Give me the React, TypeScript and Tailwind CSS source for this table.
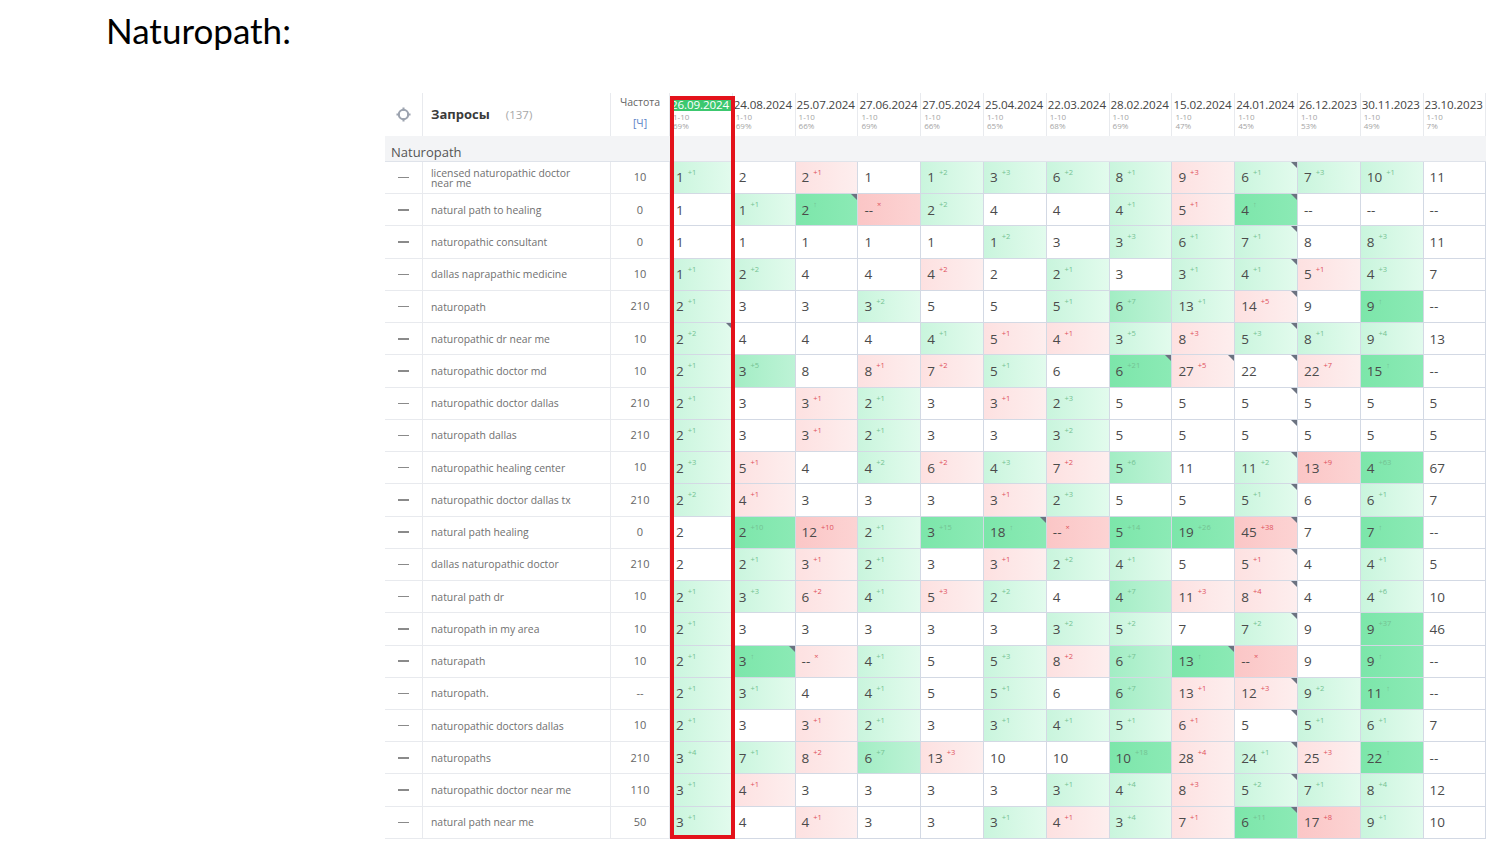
import React from 'react'

const dates = ['26.09.2024', '24.08.2024', '25.07.2024', '27.06.2024', '27.05.2024', '25.04.2024', '22.03.2024', '28.02.2024', '15.02.2024', '24.01.2024', '26.12.2023', '30.11.2023', '23.10.2023']
const pcts = ['69%', '69%', '66%', '69%', '66%', '65%', '68%', '69%', '47%', '45%', '53%', '49%', '7%']

// value [sup] colour: w white, g light green, m mid green, G green, r light pink, R pink
const rows: [string, string, string[]][] = [
  ['licensed naturopathic doctor near me', '10', ['1 +1 g', '2 w', '2 +1 r', '1 w', '1 +2 g', '3 +3 g', '6 +2 g', '8 +1 g', '9 +3 r', '6 +1 g', '7 +3 g', '10 +1 g', '11 w']],
  ['natural path to healing', '0', ['1 w', '1 +1 g', '2 ↑ G', '-- × R', '2 +2 g', '4 w', '4 w', '4 +1 g', '5 +1 r', '4 ↑ G', '-- w', '-- w', '-- w']],
  ['naturopathic consultant', '0', ['1 w', '1 w', '1 w', '1 w', '1 w', '1 +2 g', '3 w', '3 +3 g', '6 +1 g', '7 +1 g', '8 w', '8 +3 g', '11 w']],
  ['dallas naprapathic medicine', '10', ['1 +1 g', '2 +2 g', '4 w', '4 w', '4 +2 r', '2 w', '2 +1 g', '3 w', '3 +1 g', '4 +1 g', '5 +1 r', '4 +3 g', '7 w']],
  ['naturopath', '210', ['2 +1 g', '3 w', '3 w', '3 +2 g', '5 w', '5 w', '5 +1 g', '6 +7 m', '13 +1 g', '14 +5 r', '9 w', '9 ↑ G', '-- w']],
  ['naturopathic dr near me', '10', ['2 +2 g', '4 w', '4 w', '4 w', '4 +1 g', '5 +1 r', '4 +1 r', '3 +5 g', '8 +3 r', '5 +3 g', '8 +1 g', '9 +4 g', '13 w']],
  ['naturopathic doctor md', '10', ['2 +1 g', '3 +5 m', '8 w', '8 +1 r', '7 +2 r', '5 +1 g', '6 w', '6 +21 G', '27 +5 r', '22 w', '22 +7 r', '15 ↑ G', '-- w']],
  ['naturopathic doctor dallas', '210', ['2 +1 g', '3 w', '3 +1 r', '2 +1 g', '3 w', '3 +1 r', '2 +3 g', '5 w', '5 w', '5 w', '5 w', '5 w', '5 w']],
  ['naturopath dallas', '210', ['2 +1 g', '3 w', '3 +1 r', '2 +1 g', '3 w', '3 w', '3 +2 g', '5 w', '5 w', '5 w', '5 w', '5 w', '5 w']],
  ['naturopathic healing center', '10', ['2 +3 g', '5 +1 r', '4 w', '4 +2 g', '6 +2 r', '4 +3 g', '7 +2 r', '5 +6 m', '11 w', '11 +2 g', '13 +9 R', '4 +63 G', '67 w']],
  ['naturopathic doctor dallas tx', '210', ['2 +2 g', '4 +1 r', '3 w', '3 w', '3 w', '3 +1 r', '2 +3 g', '5 w', '5 w', '5 +1 g', '6 w', '6 +1 g', '7 w']],
  ['natural path healing', '0', ['2 w', '2 +10 G', '12 +10 R', '2 +1 g', '3 +15 G', '18 ↑ G', '-- × R', '5 +14 G', '19 +26 G', '45 +38 R', '7 w', '7 ↑ G', '-- w']],
  ['dallas naturopathic doctor', '210', ['2 w', '2 +1 g', '3 +1 r', '2 +1 g', '3 w', '3 +1 r', '2 +2 g', '4 +1 g', '5 w', '5 +1 r', '4 w', '4 +1 g', '5 w']],
  ['natural path dr', '10', ['2 +1 g', '3 +3 g', '6 +2 r', '4 +1 g', '5 +3 r', '2 +2 g', '4 w', '4 +7 m', '11 +3 r', '8 +4 r', '4 w', '4 +6 g', '10 w']],
  ['naturopath in my area', '10', ['2 +1 g', '3 w', '3 w', '3 w', '3 w', '3 w', '3 +2 g', '5 +2 g', '7 w', '7 +2 g', '9 w', '9 +37 G', '46 w']],
  ['naturapath', '10', ['2 +1 g', '3 ↑ G', '-- × r', '4 +1 g', '5 w', '5 +3 g', '8 +2 r', '6 +7 m', '13 ↑ G', '-- × R', '9 w', '9 ↑ G', '-- w']],
  ['naturopath.', '--', ['2 +1 g', '3 +1 g', '4 w', '4 +1 g', '5 w', '5 +1 g', '6 w', '6 +7 m', '13 +1 r', '12 +3 r', '9 +2 g', '11 ↑ G', '-- w']],
  ['naturopathic doctors dallas', '10', ['2 +1 g', '3 w', '3 +1 r', '2 +1 g', '3 w', '3 +1 g', '4 +1 g', '5 +1 g', '6 +1 r', '5 w', '5 +1 g', '6 +1 g', '7 w']],
  ['naturopaths', '210', ['3 +4 g', '7 +1 g', '8 +2 r', '6 +7 m', '13 +3 r', '10 w', '10 w', '10 +18 G', '28 +4 r', '24 +1 g', '25 +3 r', '22 ↑ G', '-- w']],
  ['naturopathic doctor near me', '110', ['3 +1 g', '4 +1 r', '3 w', '3 w', '3 w', '3 w', '3 +1 g', '4 +4 g', '8 +3 r', '5 +2 g', '7 +1 g', '8 +4 g', '12 w']],
  ['natural path near me', '50', ['3 +1 g', '4 w', '4 +1 r', '3 w', '3 w', '3 +1 g', '4 +1 r', '3 +4 g', '7 +1 r', '6 +11 G', '17 +8 R', '9 +1 g', '10 w']],
]

const marks = new Set(['1-2', '5-0', '6-7', '6-8', '11-5', '15-1', '15-8'])

const bg: Record<string, string> = {
  w: 'bg-white',
  g: 'bg-linear-to-r from-[#c9f5dd] to-[#e2fbed]',
  m: 'bg-linear-to-r from-[#a2edc4] to-[#bdf3d6]',
  G: 'bg-linear-to-r from-[#7ce6aa] to-[#8beab5]',
  r: 'bg-linear-to-r from-[#fde1e1] to-[#fdeeee]',
  R: 'bg-linear-to-r from-[#fbc6c6] to-[#fcd3d3]',
}

function Crosshair() {
  return (
    <svg width="15" height="15" viewBox="0 0 16 16" fill="none" stroke="#9ca3af" strokeWidth="2.2">
      <circle cx="8" cy="8" r="5" />
      <path d="M8 0.5v3.5M8 12v3.5M0.5 8h3.5M12 8h3.5" />
    </svg>
  )
}

function Cell({ token, mark }: { token: string; mark: boolean }) {
  const parts = token.split(' ')
  const v = parts[0]
  const sup = parts.length === 3 ? parts[1] : ''
  const c = parts[parts.length - 1]
  const pink = c === 'r' || c === 'R'
  return (
    <div className={`relative flex items-center pl-[6px] border-r border-b border-[#d3d9e4] ${bg[c]}`}>
      <span className="text-[13.5px] text-[#4b4b4b]">{v}</span>
      {sup && (
        <span className={`ml-[4px] -mt-[10px] text-[7.5px] ${pink ? 'text-[#e0525c]' : 'text-[#74c292]'}`}>{sup}</span>
      )}
      {mark && <div className="absolute right-0 top-0 border-t-[6px] border-l-[6px] border-t-[#6b7280] border-l-transparent" />}
    </div>
  )
}

export default function App() {
  return (
    <main className="min-h-[851px] bg-white font-['Open_Sans',sans-serif]">
      <h1 className="pl-[106px] pt-[10px] text-[35px] leading-[40px] text-black font-['Lato',sans-serif]">Naturopath:</h1>

      <div className="relative ml-[385px] mt-[43px] w-[1102px]">
        <div className="grid grid-cols-[38px_188px_59px_repeat(13,62.8px)] grid-rows-[43px_26px_repeat(21,32.24px)]">
          {/* header */}
          <div className="flex items-center justify-center border-r border-[#e8eaee]">
            <Crosshair />
          </div>
          <div className="flex items-center pl-[8px] gap-[16px] border-r border-[#e8eaee]">
            <span className="text-[13px] font-bold text-[#3a3a3a]">Запросы</span>
            <span className="text-[11.5px] text-[#a8a8a8]">(137)</span>
          </div>
          <div className="flex flex-col items-center pt-[2px] border-r border-[#e8eaee]">
            <span className="text-[10.5px] text-[#666]">Частота</span>
            <span className="mt-[5px] text-[10.5px] text-[#5b82c7]">[Ч]</span>
          </div>
          {dates.map((d, i) => (
            <div key={d} className="flex flex-col pt-[5px] px-[1px] border-r border-[#e8eaee]">
              <span className={`text-[11.6px] leading-[13px] tracking-[-0.1px] whitespace-nowrap ${i === 0 ? 'bg-[#3cc86f] text-white' : 'text-[#444]'}`}>{d}</span>
              <span className="mt-[1px] pl-[2px] text-[8px] leading-[9px] text-[#a5a5a5]">1-10</span>
              <span className="pl-[2px] text-[8px] leading-[9px] text-[#a5a5a5]">{pcts[i]}</span>
            </div>
          ))}

          {/* group */}
          <div className="col-span-16 pt-[7px] pl-[6px] bg-[#f3f4f6] border-b border-[#dfe3ea] text-[13px] leading-[18px] text-[#555]">
            Naturopath
          </div>

          {/* rows */}
          {rows.map(([q, f, cells], r) => (
            <React.Fragment key={q}>
              <div className="flex items-center justify-center border-r border-b border-[#e8eaee]">
                <div className="w-[11px] h-[1.5px] bg-[#8a8a8a]" />
              </div>
              <div className="flex items-center pl-[8px] border-r border-b border-[#e8eaee]">
                <span className="w-[160px] text-[10.4px] leading-[10px] text-[#707070]">{q}</span>
              </div>
              <div className="flex items-center justify-center border-r border-b border-[#e8eaee]">
                <span className="text-[11px] text-[#666]">{f}</span>
              </div>
              {cells.map((t, c) => (
                <Cell key={c} token={t} mark={(c === 9 && r !== 15) || marks.has(`${r}-${c}`)} />
              ))}
            </React.Fragment>
          ))}
        </div>

        {/* highlighted column */}
        <div className="absolute left-[285px] top-[3px] w-[65px] h-[743px] border-4 border-[#e3121b]" />
      </div>
    </main>
  )
}
